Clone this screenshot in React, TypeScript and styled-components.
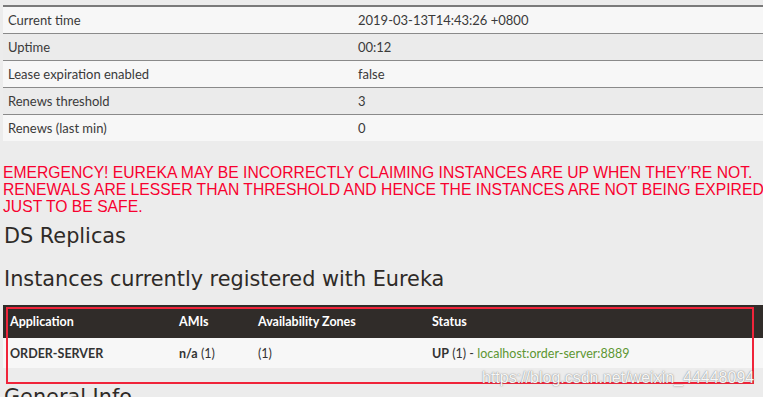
import React from "react";
import styled, { createGlobalStyle } from "styled-components";

const Global = createGlobalStyle`
  html, body { margin: 0; padding: 0; background: #ececec; overflow: hidden; }
  body { width: 763px; height: 397px; }
`;

const Page = styled.div`
  position: relative;
  padding: 5px 0 0 3px;
  font-family: Lato, "Open Sans", sans-serif;
  color: #333;
`;

const Table = styled.table`
  width: 100%;
  border-collapse: collapse;
  font-size: 13px;
`;

const InfoRow = styled.tr<{ $odd: boolean; $first: boolean }>`
  background: ${(p) => (p.$odd ? "#f7f7f7" : "#ebebeb")};
  border-top: ${(p) => (p.$first ? "2px solid #7a7a7a" : "1px solid #8a8a8a")};
`;

const InfoCell = styled.td<{ $w?: number }>`
  height: 26px;
  padding: 0 0 0 5px;
  width: ${(p) => (p.$w ? `${p.$w}px` : "auto")};
  vertical-align: middle;
  color: #3a3a3a;
`;

const Emergency = styled.h4`
  margin: 23px 0 0 0;
  font-family: "Liberation Sans", Arial, sans-serif;
  font-weight: normal;
  font-size: 15.7px;
  line-height: 17px;
  color: #f8002f;
  text-transform: uppercase;
  span { display: block; white-space: nowrap; }
`;

const Heading = styled.h2<{ $top: number }>`
  margin: ${(p) => p.$top}px 0 0 1px;
  font-family: "DejaVu Sans", sans-serif;
  font-weight: normal;
  font-size: 20.8px;
  line-height: 24px;
  color: #2e2a27;
`;

const InstTable = styled.table`
  width: 100%;
  margin-top: 14px;
  border-collapse: collapse;
  font-size: 12.5px;
`;

const HeadRow = styled.tr`
  background: #302c29;
  color: #fff;
`;

const HeadCell = styled.th<{ $w?: number }>`
  height: 33px;
  padding: 0 0 0 7px;
  text-align: left;
  font-weight: bold;
  width: ${(p) => (p.$w ? `${p.$w}px` : "auto")};
`;

const BodyRow = styled.tr`
  background: #f7f7f7;
`;

const BodyCell = styled.td`
  height: 30px;
  padding: 0 0 0 7px;
  color: #333;
  b { font-weight: bold; }
`;

const Link = styled.span`
  color: #5d9632;
`;

const Annotation = styled.div`
  position: absolute;
  left: 6px;
  top: 307px;
  width: 744px;
  height: 73px;
  border: 2px solid #f0243a;
  pointer-events: none;
`;

const Watermark = styled.div`
  position: absolute;
  left: 482px;
  top: 369px;
  font-family: "Liberation Sans", Arial, sans-serif;
  font-size: 16px;
  color: rgba(255, 255, 255, 0.95);
  text-shadow: 0 0 1px rgba(90, 90, 90, 0.7), 0 0 2px rgba(140, 140, 140, 0.5);
  white-space: nowrap;
`;

const info: [string, string][] = [
  ["Current time", "2019-03-13T14:43:26 +0800"],
  ["Uptime", "00:12"],
  ["Lease expiration enabled", "false"],
  ["Renews threshold", "3"],
  ["Renews (last min)", "0"],
];

export default function App() {
  return (
    <>
      <Global />
      <Page>
        <Table>
          <tbody>
            {info.map(([k, v], i) => (
              <InfoRow key={k} $odd={i % 2 === 0} $first={i === 0}>
                <InfoCell $w={345}>{k}</InfoCell>
                <InfoCell>{v}</InfoCell>
              </InfoRow>
            ))}
          </tbody>
        </Table>
        <Emergency>
          <span>EMERGENCY! EUREKA MAY BE INCORRECTLY CLAIMING INSTANCES ARE UP WHEN THEY’RE NOT.</span>
          <span>RENEWALS ARE LESSER THAN THRESHOLD AND HENCE THE INSTANCES ARE NOT BEING EXPIRED</span>
          <span>JUST TO BE SAFE.</span>
        </Emergency>
        <Heading $top={9}>DS Replicas</Heading>
        <Heading $top={19}>Instances currently registered with Eureka</Heading>
        <InstTable>
          <thead>
            <HeadRow>
              <HeadCell $w={162}>Application</HeadCell>
              <HeadCell $w={72}>AMIs</HeadCell>
              <HeadCell $w={167}>Availability Zones</HeadCell>
              <HeadCell>Status</HeadCell>
            </HeadRow>
          </thead>
          <tbody>
            <BodyRow>
              <BodyCell><b>ORDER-SERVER</b></BodyCell>
              <BodyCell><b>n/a</b> (1)</BodyCell>
              <BodyCell>(1)</BodyCell>
              <BodyCell>
                <b>UP</b> (1) - <Link>localhost:order-server:8889</Link>
              </BodyCell>
            </BodyRow>
          </tbody>
        </InstTable>
        <Heading $top={17}>General Info</Heading>
        <Annotation />
        <Watermark>https://blog.csdn.net/weixin_44448094</Watermark>
      </Page>
    </>
  );
}
